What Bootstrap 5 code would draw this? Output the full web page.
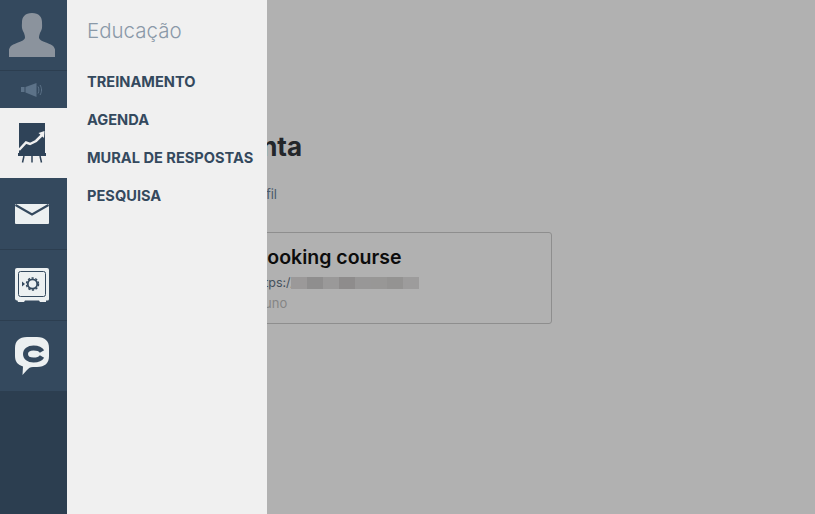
<!DOCTYPE html>
<html lang="pt-br">
<head>
    <meta charset="UTF-8">
    <meta name="viewport" content="width=device-width, initial-scale=1.0">
    <title>Educação</title>
    <link href="https://cdn.jsdelivr.net/npm/bootstrap@5.3.2/dist/css/bootstrap.min.css" rel="stylesheet">
    <style>
        html, body { height: 100%; overflow: hidden; }
        body { background: #b1b1b1; font-family: Inter, "Liberation Sans", sans-serif; position: relative; }

        /* page under the dimmer */
        .page-main { padding: 132px 0 0 232px; }
        .page-title { font-size: 26px; font-weight: 700; line-height: 30px; color: #23262a; margin: 0 0 23px -6px; }
        .page-link { font-size: 13px; line-height: 18px; color: #4c5a6c; margin-bottom: 29px; padding-left: 13px; }
        .course-box { width: 320px; height: 92px; border: 1px solid #8e8e8e; border-radius: 3px; padding: 12px 20px; }
        .course-name { font-size: 19.500px; font-weight: 600; line-height: 25px; color: #0c0c0c; margin: 0; }
        .course-url { font-size: 12.500px; line-height: 16px; color: #44505c; margin-top: 5px; display: flex; align-items: center; }
        .mosaic { display: flex; height: 12px; margin-left: -4px; }
        .mosaic span { width: 16px; }
        .course-role { font-size: 13px; line-height: 16px; color: #858585; margin-top: 4px; margin-left: -1px; }

        /* drawer */
        .drawer { position: absolute; top: 0; left: 0; bottom: 0; display: flex; }
        .side-rail { width: 67px; background: #2c3e50; }
        .rail-item { background: #34495e; display: flex; align-items: center; justify-content: center; height: 71px; padding-right: 3px; border-bottom: 1px solid #2c3e50; }
        .rail-item.rail-short { height: 37px; border-bottom: 0; }
        .rail-item.rail-active { background: #f0f0f0; height: 70px; border-bottom: 0; }
        .rail-item.rail-mail { height: 72px; }
        .rail-item.rail-last { height: 70px; border-bottom: 0; }
        .sub-panel { width: 200px; background: #f0f0f0; padding: 18px 0 0 20px; }
        .sub-title { font-size: 20.500px; font-weight: 300; line-height: 26px; color: #8a99a8; margin: 0 0 19px; }
        .sub-panel .nav-link { padding: 0; font-size: 14.600px; font-weight: 700; line-height: 38px; color: #34495e; white-space: nowrap; }
    </style>
</head>
<body>
    <main class="page-main">
        <h1 class="page-title">Conta</h1>
        <div class="page-link">Perfil</div>
        <div class="course-box">
            <h2 class="course-name">Cooking course</h2>
            <div class="course-url">https://<div class="mosaic">
                <span style="background:#9b9999"></span><span style="background:#8f8e8e"></span><span style="background:#9a9999"></span><span style="background:#8e8c8c"></span><span style="background:#989797"></span><span style="background:#989796"></span><span style="background:#949392"></span><span style="background:#9d9c9c"></span>
            </div></div>
            <div class="course-role">Aluno</div>
        </div>
    </main>

    <div class="drawer">
        <nav class="side-rail">
            <div class="rail-item">
                <svg width="46" height="44" viewBox="0 0 46 44"><path fill="#8b939d" d="M23 0c7 0 10 4 10 9 0 2 .3 3.500 0 6-.3 2-1 3-2 5-.5 1.500-1 3-1 5 .5 2 3 3 7 4.500 5 2 8 3 9 7v7.500H0V36.500c1-4 4-5 9-7 4-1.500 6.500-2.500 7-4.500 0-2-.5-3.500-1-5-1-2-1.700-3-2-5-.3-2.500 0-4 0-6 0-5 3-9 10-9z"/></svg>
            </div>
            <div class="rail-item rail-short">
                <svg width="22" height="16" viewBox="0 0 22 16"><path fill="#5c7288" d="M0 5h3.500v5H0zM4.500 5 15.500 1v14L4.500 10.500z"/><path fill="none" stroke="#5c7288" d="M17 4.500c1.200 2 1.200 5 0 7M19 3c2 3 2 7 0 10"/></svg>
            </div>
            <div class="rail-item rail-active">
                <svg width="30" height="40" viewBox="0 0 30 40"><path fill="#2f4358" d="M2 0h26v30H2z"/><path fill="none" stroke="#f0f0f0" stroke-width="2.500" d="M2 27 9 19.500l4 1.500 6-3 6-6"/><path fill="#f0f0f0" d="M27.500 8 27 15l-5.500-5z"/><path fill="#2f4358" d="M1 30h28v3H1z"/><path fill="none" stroke="#2f4358" stroke-width="1.500" d="M7 33 5.500 39.500M15 33v6.500M23 33l1.500 6.500"/></svg>
            </div>
            <div class="rail-item rail-mail">
                <svg width="34" height="20" viewBox="0 0 34 20"><rect width="34" height="20" rx="1" fill="#ecf0f1"/><path fill="none" stroke="#34495e" stroke-width="2.200" d="M.5 1 17 10.500 33.500 1"/></svg>
            </div>
            <div class="rail-item">
                <svg width="34" height="34" viewBox="0 0 34 34"><path fill="#ecf0f1" d="M2 0h30a2 2 0 0 1 2 2v29a1.500 1.500 0 0 1-1.500 1.500H31V34h-6l-1-1.500H10L9 34H3l-.5-1.500H2a2 2 0 0 1-2-2V2a2 2 0 0 1 2-2z"/><rect x="3.500" y="3.500" width="27" height="25" rx="2" fill="none" stroke="#34495e"/><circle cx="17.500" cy="16" r="4.700" fill="none" stroke="#34495e" stroke-width="1.800"/><circle cx="17.500" cy="16" r="6" fill="none" stroke="#34495e" stroke-width="1.500" stroke-dasharray="2.200 1.600"/><path fill="#34495e" d="M7 13.500 10 16l-3 2.500z"/></svg>
            </div>
            <div class="rail-item rail-last">
                <svg width="34" height="38" viewBox="0 0 34 38"><path fill="#ecf0f1" d="M12 0h10c8 0 12 4 12 11v8c0 7-4 11-12 11h-4c-3 0-4 1-6 3l-4.500 5 .5-8.500C3 28 0 25 0 19v-8C0 4 4 0 12 0z"/><path fill="none" stroke="#34495e" stroke-width="5" d="M27 14.500c-1.500-2.500-4.500-3.500-8.500-3.500-5 0-8 2.500-8 6s3 6 8 6c4 0 7-1 8.500-3.500"/></svg>
            </div>
        </nav>
        <aside class="sub-panel">
            <h2 class="sub-title">Educação</h2>
            <ul class="nav flex-column">
                <li class="nav-item"><a class="nav-link" href="#">TREINAMENTO</a></li>
                <li class="nav-item"><a class="nav-link" href="#">AGENDA</a></li>
                <li class="nav-item"><a class="nav-link" href="#">MURAL DE RESPOSTAS</a></li>
                <li class="nav-item"><a class="nav-link" href="#">PESQUISA</a></li>
            </ul>
        </aside>
    </div>

    <script src="https://cdn.jsdelivr.net/npm/bootstrap@5.3.2/dist/js/bootstrap.bundle.min.js"></script>
</body>
</html>
